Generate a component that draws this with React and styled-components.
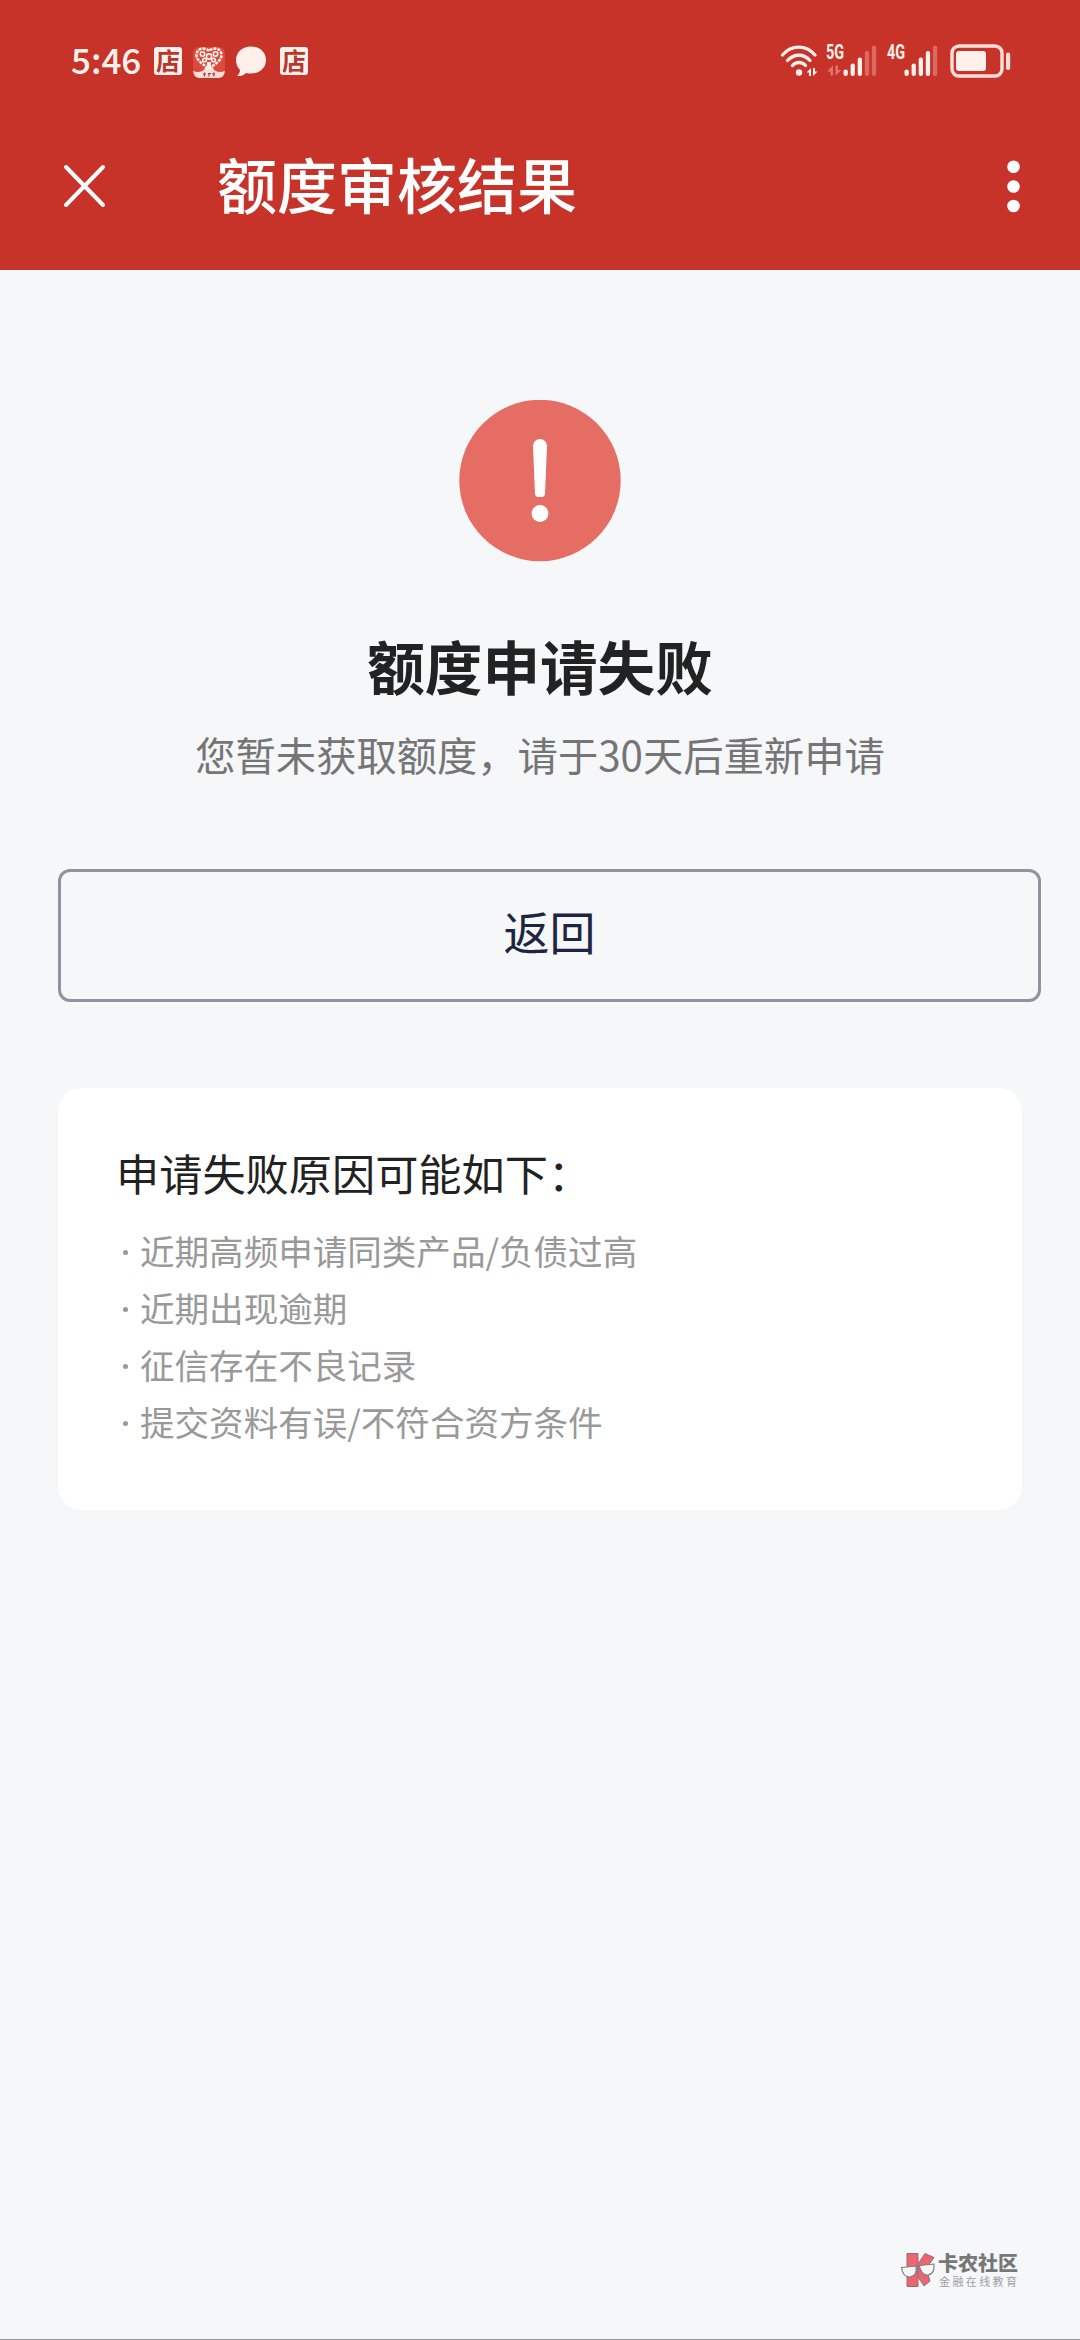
import styled, { createGlobalStyle } from "styled-components";

const reasons = [
  "近期高频申请同类产品/负债过高",
  "近期出现逾期",
  "征信存在不良记录",
  "提交资料有误/不符合资方条件",
];

function App() {
  return (
    <>
      <GlobalStyle />
      <Page>
        <Header>
          <StatusBar>
            <Notices>
              <Time>5:46</Time>
              <ShopBadge>店</ShopBadge>
              <AppIcon />
              <BubbleIcon />
              <ShopBadge>店</ShopBadge>
            </Notices>
            <Signals>
              <WifiIcon />
              <Network $gap={8}>
                <NetworkLabel>5G</NetworkLabel>
                <SignalBars active={3} arrows />
              </Network>
              <Network $gap={9}>
                <NetworkLabel>4G</NetworkLabel>
                <SignalBars active={4} />
              </Network>
              <BatteryIcon />
            </Signals>
          </StatusBar>
          <NavBar>
            <CloseIcon />
            <NavTitle>额度审核结果</NavTitle>
            <MoreIcon />
          </NavBar>
        </Header>

        <Main>
          <AlertIcon />
          <Title>额度申请失败</Title>
          <Subtitle>您暂未获取额度，请于30天后重新申请</Subtitle>
          <BackButton>返回</BackButton>
          <Card>
            <CardTitle>申请失败原因可能如下：</CardTitle>
            <List>
              {reasons.map((reason) => (
                <Item key={reason}>{reason}</Item>
              ))}
            </List>
          </Card>
        </Main>

        <Footer>
          <BrandIcon />
          <Brand>
            <BrandName>卡农社区</BrandName>
            <BrandSlogan>金融在线教育</BrandSlogan>
          </Brand>
        </Footer>
      </Page>
    </>
  );
}

const AppIcon = () => (
  <AppSvg width="34" height="34" viewBox="0 0 34 34">
    <rect x="1" y="1" width="32" height="31" rx="6" fill="#dc4a3e" />
    {/* lattice heart */}
    <path
      d="M17 5C14 1.500 5 1 4.500 9c0 6 7 9 12.500 14C22.500 18 29.500 15 29.500 9 29 1 20 1.500 17 5z"
      fill="none"
      stroke="#fff0ec"
      strokeWidth="2.600"
      strokeDasharray="3 1"
    />
    <g fill="none" stroke="#fff0ec" strokeWidth="1.6">
      <circle cx="10.500" cy="8" r="2.2" />
      <circle cx="23.500" cy="8" r="2.2" />
      <circle cx="17" cy="10.500" r="2.6" />
      <circle cx="12.500" cy="14" r="1.8" />
      <circle cx="21.500" cy="14" r="1.8" />
    </g>
    <path d="M15 16h4v4l3 3h-10l3-3z" fill="#fff0ec" />
    <path d="M1 25c5 2 9 1 12-2h8c3 3 7 4 12 2-1 5-3 7-7 7H8c-4 0-6-2-7-7z" fill="#ffdcd7" />
    <path d="M11 28h3m-1.500-1.500v4M16 27.500h3m-2 0v3m3-2.500h3m-1-1.500v4" stroke="#a93a33" strokeWidth="1.200" />
  </AppSvg>
);

const BubbleIcon = () => (
  <BubbleSvg width="32" height="32" viewBox="0 0 32 32">
    <path
      d="M16 0.500C7.500 0.500 1 6.300 1 14c0 4.600 2 7.800 4 10 0 2.500-1.500 4.500-2.800 6 3.500 0.500 6.500-0.800 9-3 1.500 0.400 3.200 0.500 4.800 0.500 8.500 0 15-5.500 15-13.500S24.500 0.500 16 0.500z"
      fill="#fff0ec"
    />
  </BubbleSvg>
);

const WifiIcon = () => (
  <svg width="38" height="34" viewBox="0 0 38 34">
    <g fill="none" stroke="#fff0ec" strokeWidth="3.300" strokeLinecap="round">
      <path d="M2.500 11C11.500 0.500 26 0.500 35 11" />
      <path d="M7.500 16.500C14 9.500 24 9.500 30 16.500" />
      <path d="M12.500 21.500c3.500-4 9.500-4 13 0" />
    </g>
    <circle cx="19" cy="28.500" r="3.200" fill="#fff0ec" />
    <path d="M26.500 28.500l4.500-4.500v8h-2v-3.500zM33 24v8l4.500-4.500h-2.500V24z" fill="#fff0ec" />
  </svg>
);

const SignalBars = ({ active, arrows }) => (
  <BarsSvg width="52" height="34" viewBox="0 0 52 34">
    {arrows && (
      <path d="M1 27.500L7 21.500v10H4.500v-4zM9.500 21.500v10l6-5.500h-3.500v-4.500z" fill="#e0766e" />
    )}
    {[25.5, 19.5, 13.5, 7, 1.5].map((top, i) => (
      <rect
        key={top}
        x={17.5 + i * 7.1}
        y={top}
        width="4.300"
        height={32 - top}
        rx="2"
        fill={i < active ? "#fff0ec" : "#dd6a62"}
      />
    ))}
  </BarsSvg>
);

const BatteryIcon = () => (
  <BatterySvg width="62" height="34" viewBox="0 0 62 34">
    <rect x="2" y="2" width="50" height="30" rx="7" fill="none" stroke="#ffdfda" strokeWidth="3.400" />
    <rect x="6" y="7" width="30" height="20" rx="3" fill="#fff0ec" />
    <rect x="56" y="8.500" width="4.200" height="17.500" rx="2" fill="#ffdfda" />
  </BatterySvg>
);

const CloseIcon = () => (
  <svg width="44" height="44" viewBox="0 0 44 44">
    <path d="M3 3l37 38M40 3L3 41" stroke="#fff" strokeWidth="4" strokeLinecap="round" />
  </svg>
);

const MoreIcon = () => (
  <MoreSvg width="13" height="53" viewBox="0 0 13 53">
    <circle cx="6.500" cy="6.800" r="6.300" />
    <circle cx="6.500" cy="26.500" r="6.300" />
    <circle cx="6.500" cy="46" r="6.300" />
  </MoreSvg>
);

const AlertIcon = () => (
  <AlertSvg width="162" height="162" viewBox="0 0 162 162">
    <circle cx="81" cy="80.500" r="80.700" fill="#e56d64" />
    <path d="M74 46a7 7 0 0 1 14 0l-2 48c-.2 2-1.500 3-3 3h-4c-1.500 0-2.800-1-3-3z" fill="#fff" />
    <circle cx="81" cy="113.500" r="8.400" fill="#fff" />
  </AlertSvg>
);

// red K wearing glasses
const BrandIcon = () => (
  <svg width="36" height="36" viewBox="0 0 36 36">
    <g fill="#ee6470" stroke="#8c7176" strokeWidth="1">
      <path d="M7 1.500h11v33H7z" />
      <path d="M18 12l7-10.500 9 4L26 16.500 30 29l-6 5-6-9z" />
    </g>
    <g fill="#f6f6f7" stroke="#7c7c7e" strokeWidth="1.100">
      <path d="M1.500 15.500l14.500-1.500c1 6-1 10.500-6 11S2 21 1.500 15.500z" />
      <path d="M19.500 13.500L34 12c.5 6-1.500 10.500-6 11s-8-3.500-8.500-9.500z" />
      <path d="M16 15.500c1-1 2.500-1 3.500-.5" />
    </g>
  </svg>
);

const GlobalStyle = createGlobalStyle`
  body {
    margin: 0;
    background: #f5f7f9;
    font-family: "Noto Sans CJK SC", "Noto Sans", sans-serif;
  }
`;

const Page = styled.div`
  display: flex;
  flex-direction: column;
  box-sizing: border-box;
  width: 1080px;
  height: 2340px;
  background: #f5f7f9;
  border-bottom: 1px solid #9c9c9c;
`;

const Header = styled.header`
  height: 270px;
  background: #c73329;
`;

const StatusBar = styled.div`
  display: flex;
  justify-content: space-between;
  box-sizing: border-box;
  height: 102px;
  padding: 44px 68px 0 71px;
`;

const Notices = styled.div`
  display: flex;
  align-items: flex-start;
`;

const Time = styled.span`
  width: 83px;
  margin-top: -3px;
  font-size: 35px;
  font-weight: 500;
  line-height: 36px;
  color: #fff0ec;
`;

const ShopBadge = styled.span`
  width: 28px;
  height: 28px;
  margin-top: 3px;
  border-radius: 3px;
  background: #fff0ec;
  color: #b5372e;
  font-size: 24px;
  font-weight: 700;
  line-height: 25px;
  text-align: center;
`;

const AppSvg = styled.svg`
  margin: 2px 9px 0 10px;
`;

const BubbleSvg = styled.svg`
  margin: 2px 13px 0 0;
`;

const Signals = styled.div`
  display: flex;
  align-items: flex-start;
`;

const Network = styled.div`
  display: flex;
  width: 52px;
  margin-left: ${(props) => props.$gap}px;
`;

const NetworkLabel = styled.span`
  width: 0;
  font-family: Roboto, sans-serif;
  font-size: 20px;
  font-weight: 700;
  line-height: 17px;
  color: #fff0ec;
  transform: scaleX(0.72);
  transform-origin: left;
`;

const BarsSvg = styled.svg`
  flex: none;
`;

const BatterySvg = styled.svg`
  margin-left: 11px;
`;

const NavBar = styled.div`
  display: flex;
  align-items: center;
  height: 168px;
  padding: 0 60px 0 63px;
`;

const NavTitle = styled.h1`
  flex: 1;
  margin: -6px 0 0 110px;
  font-size: 60px;
  font-weight: 500;
  line-height: 90px;
  color: #fff;
`;

const MoreSvg = styled.svg`
  fill: #fff;
`;

const Main = styled.main`
  display: flex;
  flex: 1;
  flex-direction: column;
  align-items: center;
  padding: 130px 58px 0;
`;

const AlertSvg = styled.svg`
  flex: none;
`;

const Title = styled.h2`
  margin: 63px 0 0;
  font-size: 57.6px;
  font-weight: 700;
  line-height: 80px;
  color: #222;
`;

const Subtitle = styled.p`
  margin: 19px 0 0;
  font-size: 40.3px;
  line-height: 60px;
  color: #757575;
`;

// wider than its column, so it hangs over the right padding
const BackButton = styled.button`
  box-sizing: border-box;
  align-self: flex-start;
  width: 983px;
  height: 133px;
  margin: 85px -19px 0 0;
  padding: 0 0 12px;
  border: 3px solid #9292a0;
  border-radius: 12px;
  background: transparent;
  font-family: inherit;
  font-size: 46px;
  color: #1d2540;
`;

const Card = styled.section`
  align-self: stretch;
  box-sizing: border-box;
  height: 422px;
  margin-top: 86px;
  padding: 54px 58px;
  border-radius: 24px;
  background: #fff;
`;

const CardTitle = styled.h3`
  margin: 0;
  font-size: 43.2px;
  font-weight: 400;
  line-height: 60px;
  color: #222;
`;

const List = styled.ul`
  margin: 19px 0 0;
  padding: 0;
  list-style: none;
`;

const Item = styled.li`
  display: flex;
  align-items: center;
  height: 57px;
  font-size: 34.56px;
  color: #999;

  &::before {
    content: "";
    width: 5px;
    height: 5px;
    margin: 6px 12px 0 7px;
    border-radius: 50%;
    background: #999;
  }
`;

const Footer = styled.footer`
  display: flex;
  gap: 2px;
  height: 87px;
  padding-left: 900px;
`;

const Brand = styled.div`
  display: flex;
  flex-direction: column;
`;

const BrandName = styled.strong`
  font-size: 20px;
  font-weight: 900;
  line-height: 22px;
  color: #777;
`;

const BrandSlogan = styled.span`
  padding-left: 1px;
  font-size: 11px;
  letter-spacing: 2.4px;
  line-height: 14px;
  color: #a0a0a0;
`;

export default App;
